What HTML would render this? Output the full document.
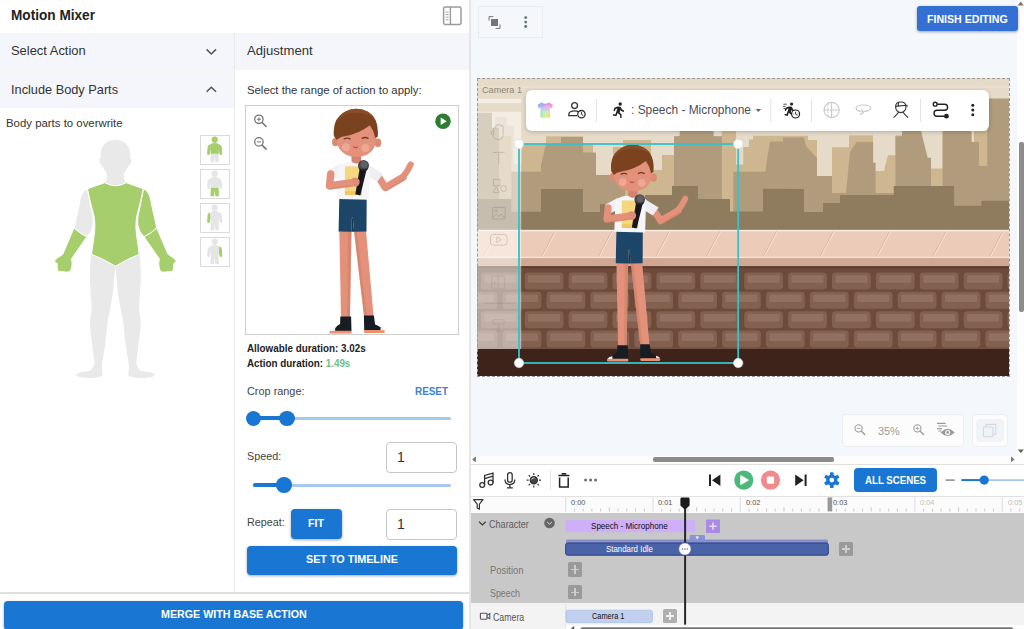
<!DOCTYPE html>
<html><head><meta charset="utf-8">
<style>
*{box-sizing:border-box;margin:0;padding:0}
html,body{width:1024px;height:629px;overflow:hidden;background:#f4f7fb;font-family:"Liberation Sans",sans-serif;color:#333}
.a{position:absolute}
.t{position:absolute;white-space:nowrap;line-height:1}
.btn{position:absolute;background:#1976d2;color:#fff;font-weight:bold;border-radius:4px;text-align:center;white-space:nowrap;box-shadow:0 1px 3px rgba(0,0,0,.35)}
.rl{transform-origin:0 50%;transform:scaleX(.92)}
.plus{position:absolute;width:14px;height:14.2px;background:#9a9a9a;border-radius:1.5px}
.plus:before{content:"";position:absolute;left:3px;right:3px;top:6.3px;height:1.6px;background:#cdcdcd}
.plus:after{content:"";position:absolute;top:3px;bottom:3px;left:6.2px;width:1.6px;background:#cdcdcd}
.plus.c:before,.plus.c:after{background:#f0f0f0}
</style></head><body>
<!-- LEFT PANEL -->
<div class="a" id="left" style="left:0;top:0;width:469px;height:629px;background:#fff"></div>
<div class="a" style="left:469px;top:0;width:2px;height:629px;background:#e6e6e8"></div>
<div class="t" id="mm" style="left:10.7px;top:8.4px;font-size:14px;font-weight:bold;color:#222;transform-origin:0 50%;transform:scaleX(0.973)">Motion Mixer</div>
<!-- header rows -->
<div class="a" style="left:0;top:33px;width:233.6px;height:37px;background:#f4f6fb"></div>
<div class="a" style="left:0;top:70.6px;width:233.6px;height:37px;background:#f4f6fb"></div>
<div class="a" style="left:234.8px;top:33px;width:234.4px;height:37px;background:#f4f6fb"></div>
<div class="a" style="left:233.6px;top:33px;width:1.2px;height:560px;background:#eaeaec"></div>
<div class="a" style="left:0;top:69.6px;width:233px;height:1.4px;background:#f5f5f4"></div>
<div class="t" id="sa" style="left:10.7px;top:44.4px;font-size:13px;color:#333;transform-origin:0 50%;transform:scaleX(0.994)">Select Action</div>
<div class="t" id="ib" style="left:10.7px;top:82.6px;font-size:13px;color:#333;transform-origin:0 50%;transform:scaleX(0.981)">Include Body Parts</div>
<div class="t" id="adj" style="left:247.0px;top:44.4px;font-size:13px;color:#333;transform-origin:0 50%;transform:scaleX(1.009)">Adjustment</div>
<div class="t" id="bp" style="left:5.7px;top:118.0px;font-size:11.5px;color:#333;transform-origin:0 50%;transform:scaleX(0.991)">Body parts to overwrite</div>
<div class="t" id="sr" style="left:246.6px;top:84.9px;font-size:11.5px;color:#333;transform-origin:0 50%;transform:scaleX(0.986)">Select the range of action to apply:</div>
<!--BODY-START-->
<svg class="a" style="left:40px;top:130px" width="160" height="260" viewBox="40 130 160 260">
<path d="M115.4,139.8 C124,139.8 130.4,146 130.2,155 L130.2,158 Q131.8,158.6 131.4,161 Q130.8,164.8 128.6,165.6 Q127,170 123.7,173.4 L123.9,178 Q124.4,181.4 126.6,182.8 Q115.4,189.6 104.2,182.8 Q106.4,181.4 106.9,178 L107.1,173.4 Q103.8,170 102.2,165.6 Q100,164.8 99.4,161 Q99,158.6 100.6,158 L100.6,155 C100.4,146 106.8,139.8 115.4,139.8 Z" fill="#e9e9e9"/>
<path d="M91.3,252 L115.3,260 L115.3,267.3 C114.6,275 114,282 113.3,289.5 C112.4,297 111,305 109.5,311.8 C108.4,317 107.8,321 107.3,325.1 C106.4,333 105.6,340 105.1,345.2 C104,352 103,358 102.2,363 Q101.6,367 102.2,370.8 Q102.8,375.6 101.8,376.3 Q96,378.4 88.4,377.9 Q79,377.8 76.1,375.2 Q76.4,373.4 80,372.6 Q87,371.6 90.6,370.8 Q94,367.6 94.6,363 C93.8,357 93,351 92.4,345.2 C91.4,337 90,330 90,322.9 C90.2,318 91.2,314 91.7,309.6 C91.6,303 91,296 90.6,289.5 C90.2,283 89.8,277 90,271.7 C90.2,265 90.8,259 91.3,252 Z" fill="#e9e9e9"/><path d="M91.3,252 L115.3,260 L115.3,267.3 C114.6,275 114,282 113.3,289.5 C112.4,297 111,305 109.5,311.8 C108.4,317 107.8,321 107.3,325.1 C106.4,333 105.6,340 105.1,345.2 C104,352 103,358 102.2,363 Q101.6,367 102.2,370.8 Q102.8,375.6 101.8,376.3 Q96,378.4 88.4,377.9 Q79,377.8 76.1,375.2 Q76.4,373.4 80,372.6 Q87,371.6 90.6,370.8 Q94,367.6 94.6,363 C93.8,357 93,351 92.4,345.2 C91.4,337 90,330 90,322.9 C90.2,318 91.2,314 91.7,309.6 C91.6,303 91,296 90.6,289.5 C90.2,283 89.8,277 90,271.7 C90.2,265 90.8,259 91.3,252 Z" fill="#e9e9e9" transform="translate(230.8,0) scale(-1,1)"/>
<g stroke="#fff" stroke-width="1" stroke-linejoin="round">
<path d="M86,189.4 C82,192 80,198 79.4,204 L74,228 Q80,233.8 86.8,236.8 Q91.8,232 92.9,225.6 C93.4,220 92.8,214 91.7,211.3 C90.2,204 88.8,197 87.6,190.2 Z" fill="#e9e9e9"/>
<path d="M74,228 Q80,233.8 86.8,236.8 L71.4,259 Q72.8,263 71.6,268 L70.2,271.6 Q67,272.8 63.6,271.8 L58,271.4 Q56.6,267 57.2,263.6 L54.6,261.8 Q54.4,259.4 57.4,258 L62.8,254.2 Z" fill="#a6ce6d"/>
<path d="M86,189.4 C82,192 80,198 79.4,204 L74,228 Q80,233.8 86.8,236.8 Q91.8,232 92.9,225.6 C93.4,220 92.8,214 91.7,211.3 C90.2,204 88.8,197 87.6,190.2 Z" fill="#a6ce6d" transform="translate(230.8,0) scale(-1,1)"/>
<path d="M74,228 Q80,233.8 86.8,236.8 L71.4,259 Q72.8,263 71.6,268 L70.2,271.6 Q67,272.8 63.6,271.8 L58,271.4 Q56.6,267 57.2,263.6 L54.6,261.8 Q54.4,259.4 57.4,258 L62.8,254.2 Z" fill="#a6ce6d" transform="translate(230.8,0) scale(-1,1)"/>
<path d="M87.5,188.7 L104.6,182.7 Q115.4,188.8 126.2,182.7 L143.3,188.7 C142,196 139,208 136.8,216 C135.8,222 135.8,228 136.1,230.4 C136.8,238 138.6,248 139.2,254.3 Q128,258.6 115.4,266.2 Q102.8,258.6 91.6,254.3 C92.2,248 94,238 94.7,230.4 C95,228 95,222 94,216 C91.8,208 88.8,196 87.5,188.7 Z" fill="#a6ce6d"/>
</g></svg>
<div class="a" style="left:199.5px;top:134.6px;width:30.5px;height:30px;border:1px solid #dadada;background:#fff"></div><svg class="a" style="left:199.5px;top:134.6px" width="30" height="30" viewBox="0 0 30 30"><path d="M10.8,18.2 L18.6,18.2 L18.9,26.4 Q18.9,27.3 18,27.3 L16.2,27.3 Q15.4,27.3 15.3,26.4 L14.7,21.6 L14.1,26.4 Q14,27.3 13.2,27.3 L11.4,27.3 Q10.5,27.3 10.5,26.4Z" fill="#e5e5e5"/><path d="M10.2,9.2 Q7.8,9.8 7.5,12.6 L7.1,19.2 Q8.4,20.6 9.7,19.6 L10.9,13.4Z" fill="#a6ce6d"/><path d="M19.2,9.2 Q21.6,9.8 21.9,12.6 L22.3,19.2 Q21,20.6 19.7,19.6 L18.5,13.4Z" fill="#a6ce6d"/><path d="M10.2,9.2 Q14.7,6.8 19.2,9.2 L18.7,18.8 L10.7,18.8Z" fill="#a6ce6d"/><circle cx="14.7" cy="4.7" r="3.1" fill="#a6ce6d"/></svg><div class="a" style="left:199.5px;top:168.6px;width:30.5px;height:30px;border:1px solid #dadada;background:#fff"></div><svg class="a" style="left:199.5px;top:168.6px" width="30" height="30" viewBox="0 0 30 30"><path d="M10.8,18.2 L18.6,18.2 L18.9,26.4 Q18.9,27.3 18,27.3 L16.2,27.3 Q15.4,27.3 15.3,26.4 L14.7,21.6 L14.1,26.4 Q14,27.3 13.2,27.3 L11.4,27.3 Q10.5,27.3 10.5,26.4Z" fill="#a6ce6d"/><path d="M10.2,9.2 Q7.8,9.8 7.5,12.6 L7.1,19.2 Q8.4,20.6 9.7,19.6 L10.9,13.4Z" fill="#e5e5e5"/><path d="M19.2,9.2 Q21.6,9.8 21.9,12.6 L22.3,19.2 Q21,20.6 19.7,19.6 L18.5,13.4Z" fill="#e5e5e5"/><path d="M10.2,9.2 Q14.7,6.8 19.2,9.2 L18.7,18.8 L10.7,18.8Z" fill="#e5e5e5"/><circle cx="14.7" cy="4.7" r="3.1" fill="#e5e5e5"/></svg><div class="a" style="left:199.5px;top:202.6px;width:30.5px;height:30px;border:1px solid #dadada;background:#fff"></div><svg class="a" style="left:199.5px;top:202.6px" width="30" height="30" viewBox="0 0 30 30"><path d="M10.8,18.2 L18.6,18.2 L18.9,26.4 Q18.9,27.3 18,27.3 L16.2,27.3 Q15.4,27.3 15.3,26.4 L14.7,21.6 L14.1,26.4 Q14,27.3 13.2,27.3 L11.4,27.3 Q10.5,27.3 10.5,26.4Z" fill="#e5e5e5"/><path d="M10.2,9.2 Q7.8,9.8 7.5,12.6 L7.1,19.2 Q8.4,20.6 9.7,19.6 L10.9,13.4Z" fill="#a6ce6d"/><path d="M19.2,9.2 Q21.6,9.8 21.9,12.6 L22.3,19.2 Q21,20.6 19.7,19.6 L18.5,13.4Z" fill="#e5e5e5"/><path d="M10.2,9.2 Q14.7,6.8 19.2,9.2 L18.7,18.8 L10.7,18.8Z" fill="#e5e5e5"/><circle cx="14.7" cy="4.7" r="3.1" fill="#e5e5e5"/></svg><div class="a" style="left:199.5px;top:236.8px;width:30.5px;height:30px;border:1px solid #dadada;background:#fff"></div><svg class="a" style="left:199.5px;top:236.8px" width="30" height="30" viewBox="0 0 30 30"><path d="M10.8,18.2 L18.6,18.2 L18.9,26.4 Q18.9,27.3 18,27.3 L16.2,27.3 Q15.4,27.3 15.3,26.4 L14.7,21.6 L14.1,26.4 Q14,27.3 13.2,27.3 L11.4,27.3 Q10.5,27.3 10.5,26.4Z" fill="#e5e5e5"/><path d="M10.2,9.2 Q7.8,9.8 7.5,12.6 L7.1,19.2 Q8.4,20.6 9.7,19.6 L10.9,13.4Z" fill="#e5e5e5"/><path d="M19.2,9.2 Q21.6,9.8 21.9,12.6 L22.3,19.2 Q21,20.6 19.7,19.6 L18.5,13.4Z" fill="#a6ce6d"/><path d="M10.2,9.2 Q14.7,6.8 19.2,9.2 L18.7,18.8 L10.7,18.8Z" fill="#e5e5e5"/><circle cx="14.7" cy="4.7" r="3.1" fill="#e5e5e5"/></svg>
<!--BODY-END-->
<svg class="a" style="left:0;top:0" width="470" height="110" viewBox="0 0 470 110">
<path d="M206.6,49.4 L211.3,54 L216,49.4" fill="none" stroke="#555" stroke-width="1.5"/>
<path d="M206.6,91.8 L211.3,87.2 L216,91.8" fill="none" stroke="#555" stroke-width="1.5"/>
<rect x="443.6" y="7" width="17.4" height="17.4" rx="1.6" fill="none" stroke="#9a9a9a" stroke-width="1.5"/>
<path d="M450.4,7v17.4" stroke="#9a9a9a" stroke-width="1.4"/>
<path d="M445.6,12h3M445.6,14.6h3M445.6,17.2h3M445.6,19.8h3" stroke="#9a9a9a" stroke-width=".9"/>
</svg>
<!-- preview box -->
<div class="a" style="left:245px;top:105px;width:214px;height:230px;border:1.5px solid #cfcfcf;background:#fff"></div>
<!--PREVIEW-START-->
<svg class="a" style="left:246.5px;top:106.5px" width="211" height="227" viewBox="246.5 106.5 211 227">
<g id="char">
<!-- right arm (viewer right) -->
<path d="M376.5,174 L384.8,187 L402.6,176.6" fill="none" stroke="#e3917a" stroke-width="7.2" stroke-linecap="round" stroke-linejoin="round"/>
<path d="M402,177 Q407,171 410.2,164" fill="none" stroke="#e3917a" stroke-width="6.2" stroke-linecap="round"/>
<path d="M386,190 L404,179" fill="none" stroke="#cf7e69" stroke-width="1.6" stroke-linecap="round" opacity=".55"/>
<!-- legs -->
<polygon points="338.8,228 351,228 349.4,318 340.5,318" fill="#e3917a"/>
<polygon points="347.5,231 351,231 349.4,318 346.8,318" fill="#cf7e69" opacity=".6"/>
<polygon points="353.4,228 365.3,228 373.2,317 363.7,317" fill="#e3917a"/>
<polygon points="353.4,231 356.4,231 366.3,317 363.7,317" fill="#cf7e69" opacity=".6"/>
<!-- shoes -->
<path d="M339.8,316 L350.6,316 L351,330.6 L333.8,330.6 Q334,326.5 339.6,323.5 Z" fill="#181d24"/>
<rect x="329" y="330.2" width="22.2" height="2.9" rx="1.2" fill="#ee9070"/>
<path d="M329.5,330.4 Q331,327.6 334.6,327.6 L334.6,330.4 Z" fill="#f1eeee"/>
<path d="M363.4,315 L373.4,315 L374.6,324 Q381,326.5 383.4,329.8 L363.7,329.8 Z" fill="#181d24"/>
<rect x="363.5" y="329.5" width="20.8" height="2.9" rx="1.2" fill="#ee9070"/>
<path d="M384,329.7 Q382.6,327.4 380,327 L380,329.7 Z" fill="#f1eeee"/>
<!-- shorts -->
<path d="M338.8,197 L366.2,197 L366,231 L353.6,231.3 L352.3,217 L351.4,217 L351,231.3 L338.1,231 Z" fill="#1d4567"/>
<path d="M351.4,217 L352.3,217 L353.6,231.3 L351,231.3 Z" fill="#163650"/>
<!-- neck -->
<rect x="351" y="153" width="9.6" height="10" fill="#d3826c"/>
<!-- shirt -->
<path d="M340.5,163 L327,170.2 L331.2,179.5 L339.5,176.4 Z" fill="#f0f0f5"/>
<path d="M366,163 L382.6,173.2 L376.6,181.6 L367.6,176 Z" fill="#eeeef4"/>
<path d="M338,165 Q345,160.6 351,161 Q355.8,164.5 360.6,161 Q366,161 369.6,165 L368.6,199.2 L336.6,198.4 Z" fill="#f6f6fa"/>
<path d="M351,161 Q355.8,165 360.6,161 Q355.8,163 351,161Z" fill="#d3826c"/>
<rect x="344.4" y="165.8" width="17" height="28.6" fill="#f7d680"/>
<rect x="344.4" y="190.6" width="17" height="3.8" fill="#f3c65e"/>
<!-- left arm -->
<path d="M330.2,173.5 L329,185.2 L354,181.8" fill="none" stroke="#e3917a" stroke-width="7.4" stroke-linecap="round" stroke-linejoin="round"/>
<path d="M329,188.6 L352,185.4" fill="none" stroke="#cf7e69" stroke-width="1.6" stroke-linecap="round" opacity=".55"/>
<!-- mic -->
<polygon points="359.2,168 366,169.6 359.8,195 354.8,193.8" fill="#17171a"/>
<circle cx="363" cy="164.9" r="5.5" fill="#46464b"/>
<circle cx="363.6" cy="164" r="3.6" fill="#5f5f66"/>
<path d="M358.2,167.2 Q362.5,170.6 367.6,167.6 L366.8,169.6 Q362.5,172 358.8,169 Z" fill="#202024"/>
<!-- hand on mic -->
<circle cx="354.6" cy="181.6" r="4.6" fill="#e3917a"/>
<path d="M352.4,178.4 L358.6,179.6 M352,181 L358.4,182.2 M352.2,183.6 L357.8,184.6" stroke="#cf7e69" stroke-width=".7" fill="none"/>
<!-- ears -->
<ellipse cx="334.9" cy="141.6" rx="3.4" ry="4.2" fill="#dd8a73"/>
<ellipse cx="377.4" cy="142.2" rx="3.4" ry="4.2" fill="#dd8a73"/>
<!-- face -->
<path d="M336,139 Q334.5,118 355.8,118 Q377,118 375.6,139 Q375,150 366,154.6 Q355.8,158.6 346,154.6 Q337,150 336,139Z" fill="#e3917a"/>
<circle cx="345.4" cy="146.8" r="4" fill="#eea795"/>
<circle cx="365" cy="147.6" r="4" fill="#eea795"/>
<path d="M343.2,138.8 Q346.6,136.6 350,138.6" stroke="#6e3a22" stroke-width="1.3" fill="none"/>
<path d="M361.2,138 Q364.6,136 368,138" stroke="#6e3a22" stroke-width="1.3" fill="none"/>
<circle cx="345.6" cy="141.6" r=".9" fill="#9fb0b8"/>
<circle cx="363.4" cy="141.8" r=".9" fill="#9fb0b8"/>
<path d="M352.6,146.4 Q354.8,148.6 357.2,146.6 Q354.8,147.4 352.6,146.4Z" fill="#d4384a" stroke="#d4384a" stroke-width=".6"/>
<!-- hair -->
<path d="M333.4,135.6 Q331.6,118 344,111.4 Q355.6,105 367.4,111.2 Q379,118 377.2,136.4 L374.8,137.6 Q373.6,130.6 369.4,124.8 Q358,133.6 344,135.8 Q338.6,136.8 336.2,139.4 Z" fill="#7b4220"/>
<path d="M344,111.4 Q355.6,105 367.4,111.2 Q372,114 374.4,118 Q362,109.6 346,113.6 Q340,116 336.4,121.6 Q338.6,114.6 344,111.4Z" fill="#8a4d26"/>
</g>
<g fill="none" stroke="#757575" stroke-width="1.3"><circle cx="258.4" cy="118.8" r="4.2"/><path d="M261.6,122 L265.6,126" stroke-linecap="round" stroke-width="1.6"/><path d="M256.4,118.8h4M258.4,116.8v4" stroke-width="1"/>
<circle cx="258.4" cy="141.4" r="4.2"/><path d="M261.6,144.6 L265.6,148.6" stroke-linecap="round" stroke-width="1.6"/><path d="M256.4,141.4h4" stroke-width="1"/></g>
<circle cx="442.5" cy="120.8" r="7.8" fill="#2e7d32"/><path d="M440.2,117 L446.2,120.8 L440.2,124.6Z" fill="#fff"/>
</svg>
<!--PREVIEW-END-->
<!-- durations -->
<div class="t" id="ad1" style="left:246.7px;top:343.1px;font-size:10.5px;font-weight:bold;color:#222;transform-origin:0 50%;transform:scaleX(0.937)">Allowable duration: 3.02s</div>
<div class="t" id="ad2" style="left:246.7px;top:358.1px;font-size:10.5px;font-weight:bold;color:#222;transform-origin:0 50%;transform:scaleX(0.937)">Action duration: <span style="color:#6cc088">1.49s</span></div>
<div class="t" id="cr" style="left:246.7px;top:385.9px;font-size:11.5px;color:#444;transform-origin:0 50%;transform:scaleX(0.947)">Crop range:</div>
<div class="t" id="rs" style="left:415.0px;top:385.9px;font-size:11.5px;color:#3a83d2;font-weight:bold;transform-origin:0 50%;transform:scaleX(0.861)">RESET</div>
<!-- crop slider -->
<div class="a" style="left:253px;top:417px;width:198px;height:3px;background:#a6c9ee;border-radius:2px"></div>
<div class="a" style="left:253px;top:416px;width:34px;height:4px;background:#1976d2"></div>
<div class="a" style="left:245.5px;top:410.5px;width:15.5px;height:15.5px;border-radius:50%;background:#1976d2"></div>
<div class="a" style="left:279px;top:410.5px;width:15.5px;height:15.5px;border-radius:50%;background:#1976d2"></div>
<!-- speed -->
<div class="t" id="sp" style="left:246.7px;top:451.1px;font-size:11.5px;color:#444;transform-origin:0 50%;transform:scaleX(0.938)">Speed:</div>
<div class="a" style="left:386px;top:441.5px;width:71px;height:31px;border:1px solid #c6c6c6;border-radius:4px;background:#fff"></div>
<div class="t" style="left:397px;top:450px;font-size:14px;color:#333">1</div>
<div class="a" style="left:253px;top:483.5px;width:198px;height:3px;background:#a6c9ee;border-radius:2px"></div>
<div class="a" style="left:253px;top:482.5px;width:31px;height:4px;background:#1976d2;border-radius:2px"></div>
<div class="a" style="left:276.2px;top:477px;width:15.5px;height:15.5px;border-radius:50%;background:#1976d2"></div>
<!-- repeat -->
<div class="t" id="rp" style="left:246.9px;top:517.2px;font-size:11.5px;color:#444;transform-origin:0 50%;transform:scaleX(0.936)">Repeat:</div>
<div class="btn" id="fit" style="left:290.5px;top:509px;width:51px;height:29.5px;font-size:11px;line-height:29px"></div>
<div class="a" style="left:386px;top:508.5px;width:71px;height:31px;border:1px solid #c6c6c6;border-radius:4px;background:#fff"></div>
<div class="t" style="left:397px;top:517px;font-size:14px;color:#333">1</div>
<div class="btn" id="stt" style="left:247px;top:546px;width:210px;height:28.5px;font-size:11px;line-height:28px"></div>
<div class="a" style="left:0;top:592px;width:469px;height:2px;background:#dfdfdf"></div>
<div class="btn" id="mrg" style="left:4px;top:601px;width:459px;height:28.6px;font-size:11px;line-height:27px"></div>

<!-- RIGHT: STAGE -->
<div class="a" style="left:477.5px;top:5.5px;width:65px;height:32.5px;border:1px solid #eaecef;background:#f5f7fb"></div>
<div class="btn" id="fin" style="z-index:3;left:916.5px;top:5.5px;width:101.5px;height:25.5px;font-size:11px;line-height:25px;background:#3470d4;border-radius:3px"></div>
<!-- right scrollbar -->
<div class="a" style="left:1017px;top:0;width:7px;height:456px;background:#fdfdfd"></div>
<div class="a" style="left:1019px;top:142px;width:4.5px;height:170px;background:#8c8c8c;border-radius:2px"></div>
<!-- SCENE placeholder -->
<!--SCENE-START-->
<svg class="a" style="left:477px;top:78px" width="532" height="298" viewBox="477 78 532 298">
<rect x="477" y="78" width="532" height="298" fill="#e6dbc8"/>
<rect x="477" y="86.5" width="532" height="1.2" fill="#efe7da" opacity=".7"/>
<polygon fill="#d6c8b0" points="495,172 495,117 506.5,117 506.5,125.6 513.7,125.6 513.7,164 522,164 522,172"/>
<polygon fill="#cdb690" points="477,229 477,199 499,199 499,136 511.4,136 511.4,172 521.4,172 521.4,150 522,150 522,144 546,144 546,131 583,131 583,144 593,144 593,175 613,175 613,147 623,147 623,140 651,140 651,170 662,170 662,155 674,155 674,131 736,131 736,164.4 743.3,164.4 743.3,147 749,147 749,139.6 753,139.6 753,135.4 808,135.4 808,140 817,140 817,176 832,176 832,147.3 849,147.3 849,131 873,131 873,171 884,171 888,155.3 895.5,155.3 895.5,131 922,131 922,168.5 942.6,168.5 942.6,131 971.5,131 971.5,142 974,142 974,131 988,131 988,100 1009,100 1009,229"/>
<rect x="522" y="129" width="199.8" height="7.3" fill="#e6dbc8"/><rect x="736" y="129" width="238" height="6.4" fill="#e6dbc8"/>
<polygon fill="#b09c7c" points="477,229 477,112.7 492,112.7 492,128 499,128 499,229"/>
<polygon fill="#b09c7c" points="511.4,229 511.4,171.7 541,171.7 541,229"/>
<polygon fill="#b09c7c" points="541,229 541,165 546,144 561,144 561,137 583,137 583,152.6 596,152.6 596,175 625,175 625,229"/>
<polygon fill="#b09c7c" points="674,229 674,136.3 679.7,136.3 679.7,131 713.6,131 713.6,136.3 721.8,136.3 721.8,229"/>
<polygon fill="#b09c7c" points="733.4,229 733.4,171.8 766,171.8 766,229"/>
<polygon fill="#b09c7c" points="762,229 762,195 767,160 770,141.6 783,141.6 783,137.5 804,137.5 806,146 817,158 817,176 832,176 832,229"/>
<polygon fill="#b09c7c" points="832,229 832,193 846,193 850,152 856.6,142 873.1,142 873.1,162.7 875.6,162.7 875.6,193 896,193 896,229"/>
<polygon fill="#b09c7c" points="895.5,229 895.5,136.3 902,136.3 902,131 921,131 927.7,157.8 931,157.8 931,229"/>
<polygon fill="#b09c7c" points="942.6,229 942.6,131 971.5,131 971.5,142 978.9,142 978.9,166 987.2,166 987.2,98.6 1009,98.6 1009,229"/>
<polygon fill="#8f7b5e" points="477,230 477,199 511.4,199 511.4,211.8 541,211.8 541,189 583,189 583,212 600,212 600,204 645,204 645,195 672,195 672,185.9 697.9,185.9 697.9,199 730,199 730,211.5 763,211.5 763,188.8 804,189 804,212 823,212 823,203 840,203 840,195 893.8,195 893.8,185.9 954.1,185.9 954.1,205.7 981.4,205.7 981.4,200.7 1009,200.7 1009,230"/>
<rect x="477" y="229.9" width="532" height="28.3" fill="#ecccb8"/>
<rect x="477" y="229.9" width="532" height="1.4" fill="#f8ece3"/>
<rect x="477" y="256.6" width="532" height="1.5" fill="#f5e2d6"/>
<path d="M440.0,231.3 L426.5,256.6" stroke="#d3ae9a" stroke-width="0.8" fill="none"/>
<path d="M441.0,231.3 L427.5,256.6" stroke="#f8e9df" stroke-width="0.8" fill="none"/>
<path d="M497.0,231.3 L483.5,256.6" stroke="#d3ae9a" stroke-width="0.8" fill="none"/>
<path d="M498.0,231.3 L484.5,256.6" stroke="#f8e9df" stroke-width="0.8" fill="none"/>
<path d="M555.0,231.3 L541.5,256.6" stroke="#d3ae9a" stroke-width="0.8" fill="none"/>
<path d="M556.0,231.3 L542.5,256.6" stroke="#f8e9df" stroke-width="0.8" fill="none"/>
<path d="M611.9,231.3 L598.4,256.6" stroke="#d3ae9a" stroke-width="0.8" fill="none"/>
<path d="M612.9,231.3 L599.4,256.6" stroke="#f8e9df" stroke-width="0.8" fill="none"/>
<path d="M669.3,231.3 L655.8,256.6" stroke="#d3ae9a" stroke-width="0.8" fill="none"/>
<path d="M670.3,231.3 L656.8,256.6" stroke="#f8e9df" stroke-width="0.8" fill="none"/>
<path d="M719.9,231.3 L706.4,256.6" stroke="#d3ae9a" stroke-width="0.8" fill="none"/>
<path d="M720.9,231.3 L707.4,256.6" stroke="#f8e9df" stroke-width="0.8" fill="none"/>
<path d="M776.7,231.3 L763.2,256.6" stroke="#d3ae9a" stroke-width="0.8" fill="none"/>
<path d="M777.7,231.3 L764.2,256.6" stroke="#f8e9df" stroke-width="0.8" fill="none"/>
<path d="M833.4,231.3 L819.9,256.6" stroke="#d3ae9a" stroke-width="0.8" fill="none"/>
<path d="M834.4,231.3 L820.9,256.6" stroke="#f8e9df" stroke-width="0.8" fill="none"/>
<path d="M889.8,231.3 L876.3,256.6" stroke="#d3ae9a" stroke-width="0.8" fill="none"/>
<path d="M890.8,231.3 L877.3,256.6" stroke="#f8e9df" stroke-width="0.8" fill="none"/>
<path d="M946.2,231.3 L932.7,256.6" stroke="#d3ae9a" stroke-width="0.8" fill="none"/>
<path d="M947.2,231.3 L933.7,256.6" stroke="#f8e9df" stroke-width="0.8" fill="none"/>
<path d="M1002.9,231.3 L989.4,256.6" stroke="#d3ae9a" stroke-width="0.8" fill="none"/>
<path d="M1003.9,231.3 L990.4,256.6" stroke="#f8e9df" stroke-width="0.8" fill="none"/>
<path d="M1059.5,231.3 L1046.0,256.6" stroke="#d3ae9a" stroke-width="0.8" fill="none"/>
<path d="M1060.5,231.3 L1047.0,256.6" stroke="#f8e9df" stroke-width="0.8" fill="none"/>
<rect x="477" y="258.1" width="532" height="8.1" fill="#cfa893"/>
<rect x="477" y="266.2" width="532" height="82.7" fill="#6d4a3a"/>
<rect x="477" y="266.2" width="532" height="2" fill="#5d3d2f"/>
<rect x="480.8" y="272.4" width="38.8" height="17" rx="3.5" fill="#83604f"/>
<rect x="484.2" y="275.2" width="32" height="7.6" rx="1" fill="#92705f"/>
<rect x="524.7" y="272.4" width="38.8" height="17" rx="3.5" fill="#83604f"/>
<rect x="528.1" y="275.2" width="32" height="7.6" rx="1" fill="#92705f"/>
<rect x="568.6" y="272.4" width="38.8" height="17" rx="3.5" fill="#83604f"/>
<rect x="572.0" y="275.2" width="32" height="7.6" rx="1" fill="#92705f"/>
<rect x="612.5" y="272.4" width="38.8" height="17" rx="3.5" fill="#83604f"/>
<rect x="615.9" y="275.2" width="32" height="7.6" rx="1" fill="#92705f"/>
<rect x="656.4" y="272.4" width="38.8" height="17" rx="3.5" fill="#83604f"/>
<rect x="659.8" y="275.2" width="32" height="7.6" rx="1" fill="#92705f"/>
<rect x="700.3" y="272.4" width="38.8" height="17" rx="3.5" fill="#83604f"/>
<rect x="703.7" y="275.2" width="32" height="7.6" rx="1" fill="#92705f"/>
<rect x="744.2" y="272.4" width="38.8" height="17" rx="3.5" fill="#83604f"/>
<rect x="747.6" y="275.2" width="32" height="7.6" rx="1" fill="#92705f"/>
<rect x="788.1" y="272.4" width="38.8" height="17" rx="3.5" fill="#83604f"/>
<rect x="791.5" y="275.2" width="32" height="7.6" rx="1" fill="#92705f"/>
<rect x="832.0" y="272.4" width="38.8" height="17" rx="3.5" fill="#83604f"/>
<rect x="835.4" y="275.2" width="32" height="7.6" rx="1" fill="#92705f"/>
<rect x="875.9" y="272.4" width="38.8" height="17" rx="3.5" fill="#83604f"/>
<rect x="879.3" y="275.2" width="32" height="7.6" rx="1" fill="#92705f"/>
<rect x="919.8" y="272.4" width="38.8" height="17" rx="3.5" fill="#83604f"/>
<rect x="923.2" y="275.2" width="32" height="7.6" rx="1" fill="#92705f"/>
<rect x="963.7" y="272.4" width="38.8" height="17" rx="3.5" fill="#83604f"/>
<rect x="967.1" y="275.2" width="32" height="7.6" rx="1" fill="#92705f"/>
<rect x="1007.6" y="272.4" width="38.8" height="17" rx="3.5" fill="#83604f"/>
<rect x="1011.0" y="275.2" width="32" height="7.6" rx="1" fill="#92705f"/>
<rect x="458.7" y="291.7" width="38.8" height="17" rx="3.5" fill="#83604f"/>
<rect x="462.1" y="294.5" width="32" height="7.6" rx="1" fill="#92705f"/>
<rect x="502.6" y="291.7" width="38.8" height="17" rx="3.5" fill="#83604f"/>
<rect x="506.0" y="294.5" width="32" height="7.6" rx="1" fill="#92705f"/>
<rect x="546.5" y="291.7" width="38.8" height="17" rx="3.5" fill="#83604f"/>
<rect x="549.9" y="294.5" width="32" height="7.6" rx="1" fill="#92705f"/>
<rect x="590.4" y="291.7" width="38.8" height="17" rx="3.5" fill="#83604f"/>
<rect x="593.8" y="294.5" width="32" height="7.6" rx="1" fill="#92705f"/>
<rect x="634.3" y="291.7" width="38.8" height="17" rx="3.5" fill="#83604f"/>
<rect x="637.7" y="294.5" width="32" height="7.6" rx="1" fill="#92705f"/>
<rect x="678.2" y="291.7" width="38.8" height="17" rx="3.5" fill="#83604f"/>
<rect x="681.6" y="294.5" width="32" height="7.6" rx="1" fill="#92705f"/>
<rect x="722.1" y="291.7" width="38.8" height="17" rx="3.5" fill="#83604f"/>
<rect x="725.5" y="294.5" width="32" height="7.6" rx="1" fill="#92705f"/>
<rect x="766.0" y="291.7" width="38.8" height="17" rx="3.5" fill="#83604f"/>
<rect x="769.4" y="294.5" width="32" height="7.6" rx="1" fill="#92705f"/>
<rect x="809.9" y="291.7" width="38.8" height="17" rx="3.5" fill="#83604f"/>
<rect x="813.3" y="294.5" width="32" height="7.6" rx="1" fill="#92705f"/>
<rect x="853.8" y="291.7" width="38.8" height="17" rx="3.5" fill="#83604f"/>
<rect x="857.2" y="294.5" width="32" height="7.6" rx="1" fill="#92705f"/>
<rect x="897.7" y="291.7" width="38.8" height="17" rx="3.5" fill="#83604f"/>
<rect x="901.1" y="294.5" width="32" height="7.6" rx="1" fill="#92705f"/>
<rect x="941.6" y="291.7" width="38.8" height="17" rx="3.5" fill="#83604f"/>
<rect x="945.0" y="294.5" width="32" height="7.6" rx="1" fill="#92705f"/>
<rect x="985.5" y="291.7" width="38.8" height="17" rx="3.5" fill="#83604f"/>
<rect x="988.9" y="294.5" width="32" height="7.6" rx="1" fill="#92705f"/>
<rect x="480.8" y="311.2" width="38.8" height="17" rx="3.5" fill="#83604f"/>
<rect x="484.2" y="314.0" width="32" height="7.6" rx="1" fill="#92705f"/>
<rect x="524.7" y="311.2" width="38.8" height="17" rx="3.5" fill="#83604f"/>
<rect x="528.1" y="314.0" width="32" height="7.6" rx="1" fill="#92705f"/>
<rect x="568.6" y="311.2" width="38.8" height="17" rx="3.5" fill="#83604f"/>
<rect x="572.0" y="314.0" width="32" height="7.6" rx="1" fill="#92705f"/>
<rect x="612.5" y="311.2" width="38.8" height="17" rx="3.5" fill="#83604f"/>
<rect x="615.9" y="314.0" width="32" height="7.6" rx="1" fill="#92705f"/>
<rect x="656.4" y="311.2" width="38.8" height="17" rx="3.5" fill="#83604f"/>
<rect x="659.8" y="314.0" width="32" height="7.6" rx="1" fill="#92705f"/>
<rect x="700.3" y="311.2" width="38.8" height="17" rx="3.5" fill="#83604f"/>
<rect x="703.7" y="314.0" width="32" height="7.6" rx="1" fill="#92705f"/>
<rect x="744.2" y="311.2" width="38.8" height="17" rx="3.5" fill="#83604f"/>
<rect x="747.6" y="314.0" width="32" height="7.6" rx="1" fill="#92705f"/>
<rect x="788.1" y="311.2" width="38.8" height="17" rx="3.5" fill="#83604f"/>
<rect x="791.5" y="314.0" width="32" height="7.6" rx="1" fill="#92705f"/>
<rect x="832.0" y="311.2" width="38.8" height="17" rx="3.5" fill="#83604f"/>
<rect x="835.4" y="314.0" width="32" height="7.6" rx="1" fill="#92705f"/>
<rect x="875.9" y="311.2" width="38.8" height="17" rx="3.5" fill="#83604f"/>
<rect x="879.3" y="314.0" width="32" height="7.6" rx="1" fill="#92705f"/>
<rect x="919.8" y="311.2" width="38.8" height="17" rx="3.5" fill="#83604f"/>
<rect x="923.2" y="314.0" width="32" height="7.6" rx="1" fill="#92705f"/>
<rect x="963.7" y="311.2" width="38.8" height="17" rx="3.5" fill="#83604f"/>
<rect x="967.1" y="314.0" width="32" height="7.6" rx="1" fill="#92705f"/>
<rect x="1007.6" y="311.2" width="38.8" height="17" rx="3.5" fill="#83604f"/>
<rect x="1011.0" y="314.0" width="32" height="7.6" rx="1" fill="#92705f"/>
<rect x="458.7" y="330.5" width="38.8" height="17" rx="3.5" fill="#83604f"/>
<rect x="462.1" y="333.3" width="32" height="7.6" rx="1" fill="#92705f"/>
<rect x="502.6" y="330.5" width="38.8" height="17" rx="3.5" fill="#83604f"/>
<rect x="506.0" y="333.3" width="32" height="7.6" rx="1" fill="#92705f"/>
<rect x="546.5" y="330.5" width="38.8" height="17" rx="3.5" fill="#83604f"/>
<rect x="549.9" y="333.3" width="32" height="7.6" rx="1" fill="#92705f"/>
<rect x="590.4" y="330.5" width="38.8" height="17" rx="3.5" fill="#83604f"/>
<rect x="593.8" y="333.3" width="32" height="7.6" rx="1" fill="#92705f"/>
<rect x="634.3" y="330.5" width="38.8" height="17" rx="3.5" fill="#83604f"/>
<rect x="637.7" y="333.3" width="32" height="7.6" rx="1" fill="#92705f"/>
<rect x="678.2" y="330.5" width="38.8" height="17" rx="3.5" fill="#83604f"/>
<rect x="681.6" y="333.3" width="32" height="7.6" rx="1" fill="#92705f"/>
<rect x="722.1" y="330.5" width="38.8" height="17" rx="3.5" fill="#83604f"/>
<rect x="725.5" y="333.3" width="32" height="7.6" rx="1" fill="#92705f"/>
<rect x="766.0" y="330.5" width="38.8" height="17" rx="3.5" fill="#83604f"/>
<rect x="769.4" y="333.3" width="32" height="7.6" rx="1" fill="#92705f"/>
<rect x="809.9" y="330.5" width="38.8" height="17" rx="3.5" fill="#83604f"/>
<rect x="813.3" y="333.3" width="32" height="7.6" rx="1" fill="#92705f"/>
<rect x="853.8" y="330.5" width="38.8" height="17" rx="3.5" fill="#83604f"/>
<rect x="857.2" y="333.3" width="32" height="7.6" rx="1" fill="#92705f"/>
<rect x="897.7" y="330.5" width="38.8" height="17" rx="3.5" fill="#83604f"/>
<rect x="901.1" y="333.3" width="32" height="7.6" rx="1" fill="#92705f"/>
<rect x="941.6" y="330.5" width="38.8" height="17" rx="3.5" fill="#83604f"/>
<rect x="945.0" y="333.3" width="32" height="7.6" rx="1" fill="#92705f"/>
<rect x="985.5" y="330.5" width="38.8" height="17" rx="3.5" fill="#83604f"/>
<rect x="988.9" y="333.3" width="32" height="7.6" rx="1" fill="#92705f"/>
<rect x="477" y="348.9" width="532" height="27.5" fill="#3d2319"/>
<use href="#char" transform="translate(289.95,40.63) scale(0.9636)"/>
<rect x="477" y="111.7" width="44.2" height="237.3" fill="#fff" opacity="0.5"/>
<rect x="477" y="98.7" width="44.2" height="4.5" fill="#fff" opacity="0.5"/>
<g fill="none" stroke="#6b5d50" stroke-width="1" opacity=".24">
<path d="M493.6,135 v-6.6 q0,-1.2 1.2,-1.2 q1.2,0 1.2,1.2 v-2.4 q0,-1.2 1.2,-1.2 q1.2,0 1.2,1.2 v-0.6 q0,-1.2 1.2,-1.2 q1.2,0 1.2,1.2 v1.2 q0,-1.2 1.2,-1.2 q1.2,0 1.2,1.2 v8 q0,5 -5,5 q-3.6,0 -5,-3 l-2.6,-4.6 q1.4,-1.6 3,0 z"/>
<path d="M493,152.4h11.6M498.8,152.4v12"/>
<rect x="493.4" y="179.4" width="6.4" height="6.4"/><circle cx="503.6" cy="188.6" r="3"/><path d="M493,192.6l3.2,-5.4 3.2,5.4z"/>
<rect x="492.6" y="207.4" width="12.6" height="11.6" rx="1"/><circle cx="496" cy="210.8" r="1.1"/><path d="M493,217.6l3.4,-3.6 2.4,2.4 2.2,-2.4 3.6,3.6"/>
<rect x="490.4" y="234.4" width="16.6" height="10.8" rx="3"/><path d="M496.8,237l4.6,2.8 -4.6,2.8z"/>
</g>
<g fill="none" stroke="#5a4a40" stroke-width="1" opacity=".12">
<rect x="491.6" y="276" width="13" height="13" rx="1.6"/><path d="M498,276v13M494.4,281v3"/>
<path d="M483.5,303.3h32"/>
<rect x="493" y="319.6" width="11" height="4.6" rx="1"/><path d="M498.4,324.2v3.4"/><rect x="497.4" y="327.6" width="2" height="4.4" rx="1"/>
</g>
<rect x="519" y="144" width="219.2" height="219" fill="none" stroke="#35c3c9" stroke-width="1.8"/>
<circle cx="519" cy="144" r="4.7" fill="#fff" stroke="#d5d8e0" stroke-width="0.6"/>
<circle cx="738.2" cy="144" r="4.7" fill="#fff" stroke="#d5d8e0" stroke-width="0.6"/>
<circle cx="519" cy="363" r="4.7" fill="#fff" stroke="#d5d8e0" stroke-width="0.6"/>
<circle cx="738.2" cy="363" r="4.7" fill="#fff" stroke="#d5d8e0" stroke-width="0.6"/>
</svg>
<!--SCENE-END-->
<div class="a" style="left:476.5px;top:77.5px;width:533px;height:299px;border:1px dashed #9a9a9a"></div>
<div class="t" id="cam1" style="left:481.8px;top:85.3px;font-size:9.5px;color:#8d8779;transform-origin:0 50%;transform:scaleX(0.959)">Camera 1</div>
<div class="a" id="tb" style="left:525.5px;top:90px;width:463px;height:40.5px;background:#fff;border-radius:6px;box-shadow:0 1px 4px rgba(0,0,0,.22)"></div>
<!--TOOLBAR-START-->
<svg class="a" style="left:525px;top:90px" width="464" height="41" viewBox="525 90 464 41">
<defs><linearGradient id="rb" x1="0" y1="0" x2="1" y2="0"><stop offset="0" stop-color="#5aa8f0"/><stop offset=".45" stop-color="#b98cf0"/><stop offset=".75" stop-color="#f77fd0"/><stop offset="1" stop-color="#f9709a"/></linearGradient>
<linearGradient id="rb2" x1="0" y1="0" x2="0" y2="1"><stop offset="0" stop-color="#fff" stop-opacity="0"/><stop offset=".38" stop-color="#e8f4f0" stop-opacity=".5"/><stop offset=".7" stop-color="#a8f0a0" stop-opacity=".95"/><stop offset="1" stop-color="#d8f060"/></linearGradient>
<linearGradient id="rb3" x1="0" y1="0" x2="1" y2="0"><stop offset="0" stop-color="#7af08a" stop-opacity=".9"/><stop offset=".5" stop-color="#fff" stop-opacity=".2"/><stop offset="1" stop-color="#ffd070" stop-opacity=".9"/></linearGradient></defs>
<!-- tshirt -->
<g id="tsh"><path d="M541.6,102.6 Q545.2,105 548.8,102.6 L553,105 L551.4,108.6 L549.6,107.8 L549.6,117.2 L540.8,117.2 L540.8,107.8 L539,108.6 L537.4,105 Z" fill="url(#rb)"/>
<path d="M541.6,102.6 Q545.2,105 548.8,102.6 L553,105 L551.4,108.6 L549.6,107.8 L549.6,117.2 L540.8,117.2 L540.8,107.8 L539,108.6 L537.4,105 Z" fill="url(#rb2)"/>
<rect x="540.8" y="111" width="8.8" height="6.2" fill="url(#rb3)"/></g>
<!-- person+clock -->
<g fill="none" stroke="#333" stroke-width="1.3"><circle cx="574.6" cy="105.6" r="2.9"/><path d="M579.2,112 Q574.6,109.6 570,112 Q568.8,112.8 568.8,114.4 L568.8,115.6 L577,115.6"/><circle cx="581.4" cy="114.2" r="3.7"/><path d="M581.4,112v2.4l1.8,1" stroke-width="1"/></g>
<path d="M596.4,99v23M770.8,99v23M811.5,99v23M920.5,99v23" stroke="#e3e3e3" stroke-width="1"/>
<!-- running man -->
<g fill="#222"><circle cx="620.2" cy="104" r="1.7"/><path d="M617.6,106.4 L620.6,106.8 L622,109.6 L624.2,110.6 L623.8,112 L621,111 L620.4,109.8 L619.6,112.6 L621.6,114.4 L621.6,118 L620.2,118 L620.2,115.2 L617.6,113 L616.4,116.2 L612.8,115.4 L613.2,114 L615.4,114.4 L617.4,108.4 L615.6,109 L614.8,111.2 L613.4,110.8 L614.4,107.8 Z"/></g>
<path d="M755.6,109 L761.2,109 L758.4,112 Z" fill="#666"/>
<!-- running+clock -->
<g fill="#222"><circle cx="791.6" cy="104" r="1.6"/><path d="M788.8,106.4 L791.8,106.8 L793.2,109.4 L795.2,110.2 L794.8,111.6 L792.2,110.8 L791.6,109.8 L790.8,112.4 L792.6,114 L791.4,115 L788.8,112.8 L787.6,116 L784.4,115.2 L784.8,113.8 L786.6,114.2 L788.6,108.4 L786.8,109 L786,111 L784.6,110.6 L785.6,107.8 Z"/><path d="M783.4,104.2h3.4M783,106.4h2.6M783.4,108.6h2" stroke="#222" stroke-width=".8"/></g>
<circle cx="795.6" cy="114" r="4" fill="#fff" stroke="#222" stroke-width="1.2"/><path d="M795.6,111.8v2.4l1.8,1M793,114h.6M798.2,114h-.6" stroke="#222" stroke-width=".9" fill="none"/>
<!-- globe -->
<g fill="none" stroke="#c9c9c9" stroke-width="1.1"><circle cx="831.6" cy="110" r="7.6"/><path d="M824,110h15.2M831.6,102.4v15.2" /><path d="M828.6,103 Q826.6,110 828.6,117" opacity=".6"/></g>
<!-- loop arrow -->
<g fill="none" stroke="#c9c9c9" stroke-width="1.2"><path d="M861,111.6 Q855.4,110.4 856.2,107.6 Q857.4,105 863.4,105 Q870.6,105 870.8,108 Q870.8,111 863.2,111.6"/><path d="M861.4,109.4 L863.4,112.8 L860,114.4" /></g>
<!-- head cap -->
<g fill="none" stroke="#333" stroke-width="1.1"><path d="M895.6,106.6 Q895.6,102 900.8,102 Q906,102 906,106.6 Q906,112 900.8,112.6 Q895.6,112 895.6,106.6Z"/><path d="M895.4,106.4 L906.2,105.2 L907.8,106.4"/><path d="M898.6,102.6 Q898,104.6 898.6,106"/><path d="M898.6,112.2 L896.8,114.4 L893.6,117.6M903,112.2 L904.8,114.4 L908,117.6"/></g>
<!-- path icon -->
<g fill="none" stroke="#222" stroke-width="1.4"><circle cx="935.2" cy="104.2" r="1.9"/><path d="M937.2,104.2 L944.6,104.2 Q947.6,104.2 947.6,107.2 Q947.6,110.2 944.6,110.2 L937,110.2 Q934,110.2 934,113.2 Q934,116.2 937,116.2 L944,116.2"/></g><circle cx="946.4" cy="116.2" r="2.4" fill="#222"/>
<g fill="#222"><circle cx="972.8" cy="105.2" r="1.5"/><circle cx="972.8" cy="110" r="1.5"/><circle cx="972.8" cy="114.8" r="1.5"/></g>
</svg>
<div class="t" id="spm" style="left:630.7px;top:104.0px;font-size:12px;color:#4a4e57;transform-origin:0 50%;transform:scaleX(0.994)">: Speech - Microphone</div>
<!--TOOLBAR-END-->
<!-- top-left stage icons -->
<svg class="a" style="left:478px;top:6px" width="64" height="32" viewBox="478 6 64 32">
<rect x="491" y="19" width="7" height="7" fill="#757575"/>
<path d="M489,20.6v-4h4.4M500,24.4v4h-4.4" fill="none" stroke="#757575" stroke-width="1"/>
<g fill="#687080"><circle cx="525.7" cy="17.6" r="1.45"/><circle cx="525.7" cy="22.1" r="1.45"/><circle cx="525.7" cy="26.5" r="1.45"/></g>
</svg>
<!-- zoom boxes -->
<div class="a" style="left:841.5px;top:413.5px;width:122.5px;height:33px;border:1px solid #eceef1;background:#fcfcfd;border-radius:4px"></div>
<div class="a" style="left:971.5px;top:413.5px;width:36.5px;height:33px;border:1px solid #eceef1;background:#fcfcfd;border-radius:4px"></div>
<div class="a" style="left:976px;top:418.5px;width:27.5px;height:23px;background:#f0f4f9;border-radius:4px"></div>
<div class="t" id="z35" style="left:878.3px;top:425.7px;font-size:11.5px;color:#9a9a9a;transform-origin:0 50%;transform:scaleX(0.947)">35%</div>
<!-- h scrollbar -->
<div class="a" style="left:471px;top:455.5px;width:553px;height:8px;background:#fdfdfd"></div>
<div class="a" style="left:652.5px;top:457px;width:181px;height:4.5px;background:#8a8a8a;border-radius:2px"></div>
<div class="a" style="left:471px;top:463.5px;width:553px;height:1px;background:#e0e0e0"></div>
<!-- zoom box icons -->
<svg class="a" style="left:842px;top:414px" width="166" height="33" viewBox="842 414 166 33">
<g fill="none" stroke="#9c9c9c" stroke-width="1.1"><circle cx="858.6" cy="428.4" r="3.6"/><path d="M861.2,431l3.6,3.6" stroke-linecap="round" stroke-width="1.4"/><path d="M856.8,428.4h3.6" stroke-width=".9"/>
<circle cx="917.4" cy="428.4" r="3.6"/><path d="M920,431l3.6,3.6" stroke-linecap="round" stroke-width="1.4"/><path d="M915.6,428.4h3.6M917.4,426.6v3.6" stroke-width=".9"/></g>
<g stroke="#9a9a9a" stroke-width="1.1" fill="none"><path d="M937,423.4h8.6M938.4,426h8.6M937,428.6h5M938.4,431h3"/></g>
<path d="M940.6,432.4 Q947.6,425.2 954.8,432.4 Q947.6,439.6 940.6,432.4Z" fill="#999"/><circle cx="947.7" cy="432.4" r="2.5" fill="#fcfcfd"/><circle cx="947.7" cy="432.4" r="1.3" fill="#999"/>
<g fill="none" stroke="#d6d8dc" stroke-width="1.1"><rect x="983.4" y="427" width="9.6" height="9.6" rx="1"/><path d="M986,427v-2.6h9.8v9.8h-2.6"/></g>
</svg>
<svg class="a" style="left:471px;top:0" width="553" height="464" viewBox="471 0 553 464">
<path d="M475.6,459.4l-3.2,0 3.2,-2.6zM475.6,459.4l-3.2,0 3.2,2.6z" fill="#777"/>
<path d="M1011,456.6 L1014.6,459.4 L1011,462.2Z" fill="#777"/><path d="M472.4,459.4 L475.8,456.6 L475.8,462.2Z" fill="#777"/>
<path d="M1017.6,5.4h6.2l-3.1,-3.8z" fill="#777"/><path d="M1017.8,449.6h6l-3,3.6z" fill="#666"/>
</svg>
<!-- transport -->
<div class="a" style="left:471px;top:464.5px;width:553px;height:31.5px;background:#fff"></div>
<div class="a" style="left:550px;top:470px;width:1px;height:20px;background:#e4e4e4"></div>
<div class="btn" id="als" style="left:854px;top:468px;width:82.5px;height:24px;font-size:11px;line-height:24px;box-shadow:none"></div>
<!-- ruler -->
<div class="a" style="left:471px;top:496px;width:553px;height:16.5px;background:#fbfbfb;border-top:1px solid #e2e2e2"></div>
<!-- tracks -->
<div class="a" style="left:471px;top:512.5px;width:553px;height:91px;background:#c8c8c8"></div>
<div class="a" style="left:471px;top:603.4px;width:553px;height:26px;background:#f3f3f3"></div>
<div class="t" id="tfit" style="left:308.1px;top:518.1px;font-size:11px;color:#fff;font-weight:bold;transform-origin:0 50%;transform:scaleX(0.964)">FIT</div>
<div class="t" id="tstt" style="left:306.0px;top:554.3px;font-size:11px;color:#fff;font-weight:bold;transform-origin:0 50%;transform:scaleX(0.978)">SET TO TIMELINE</div>
<div class="t" id="tmrg" style="left:160.7px;top:609.2px;font-size:11.5px;color:#fff;font-weight:bold;transform-origin:0 50%;transform:scaleX(0.930)">MERGE WITH BASE ACTION</div>
<div class="t" id="tfin" style="left:926.9px;top:13.7px;font-size:11px;z-index:4;color:#fff;font-weight:bold;transform-origin:0 50%;transform:scaleX(0.963)">FINISH EDITING</div>
<div class="t" id="tals" style="left:864.5px;top:474.8px;font-size:10.5px;color:#fff;font-weight:bold;transform-origin:0 50%;transform:scaleX(0.920)">ALL SCENES</div>
<!--TL-START-->
<svg class="a" style="left:471px;top:464px" width="553" height="165" viewBox="471 464 553 165">
<!-- music -->
<g fill="none" stroke="#333" stroke-width="1.3"><circle cx="482.2" cy="485" r="2.4"/><circle cx="490.6" cy="482.6" r="2.4"/><path d="M484.6,485 V475.4 L493,473 V482.6M484.6,478.6 L493,476.2"/></g>
<!-- mic -->
<g fill="none" stroke="#333" stroke-width="1.3"><rect x="507.6" y="472.6" width="4.6" height="9.6" rx="2.3"/><path d="M505,479.6 Q505,484.6 509.9,484.6 Q514.8,484.6 514.8,479.6M509.9,484.6v3M507,487.8h5.8"/></g>
<!-- brightness -->
<g fill="none" stroke="#333" stroke-width="1.2"><circle cx="533.8" cy="480.2" r="3.6" fill="#444"/><path d="M533.8,473v2M533.8,485.4v2M526.6,480.2h2M539,480.2h2M528.7,475.1l1.4,1.4M537.5,483.9l1.4,1.4M528.7,485.3l1.4,-1.4M537.5,476.5l1.4,-1.4"/></g><path d="M531.6,479.4 A2.4,2.4 0 0 1 534.6,478" fill="none" stroke="#ddd" stroke-width="1"/>
<!-- trash -->
<g fill="none" stroke="#222" stroke-width="1.5"><path d="M559.6,477.4v9.6h8.6v-9.6"/><path d="M558.4,475.6h11M561.6,473.8h4.6"/></g>
<g fill="#707070"><circle cx="585.6" cy="480" r="1.55"/><circle cx="590.6" cy="480" r="1.55"/><circle cx="595.6" cy="480" r="1.55"/></g>
<!-- skip prev / next -->
<path d="M709,474.4h2v11.6h-2zM720.4,474.4v11.6l-8.4,-5.8z" fill="#222"/>
<path d="M804.6,474.4h2v11.6h-2zM795.2,474.4v11.6l8.4,-5.8z" fill="#222"/>
<circle cx="743.8" cy="480.1" r="9.6" fill="#4cb87b"/><path d="M740.8,475.6 L748.4,480.1 L740.8,484.6Z" fill="#fff" stroke="#fff" stroke-width="1" stroke-linejoin="round"/>
<circle cx="770.5" cy="480.1" r="9.6" fill="#f08b8b"/><rect x="766.9" y="476.5" width="7.2" height="7.2" rx="1" fill="#fff"/>
<!-- gear -->
<g transform="translate(831.8,480.1)"><g fill="#1976d2"><circle r="5.6"/><g id="gt"><rect x="-1.8" y="-7.9" width="3.6" height="15.8" rx=".8"/></g><use href="#gt" transform="rotate(60)"/><use href="#gt" transform="rotate(120)"/></g><circle r="2.4" fill="#fff"/></g>
<path d="M945.6,480.1h9.2" stroke="#8a8a8a" stroke-width="1.5"/>
<path d="M961.4,480.1H1024" stroke="#a6c9ee" stroke-width="1.6"/><path d="M961.4,480.1H984" stroke="#1976d2" stroke-width="2"/><circle cx="984.2" cy="480.1" r="4.6" fill="#1976d2"/>
<!-- funnel -->
<path d="M473.6,499.6h9.4l-3.6,4.6v5l-2.2,-1.2v-3.8z" fill="none" stroke="#333" stroke-width="1.2" stroke-linejoin="round"/>
<!-- ruler -->
<path d="M565.7,497V512" stroke="#dcdcdc" stroke-width="1"/>
<path d="M574.4,508.6V511.6" stroke="#c4c4c4" stroke-width=".9"/>
<path d="M583.2,508.6V511.6" stroke="#c4c4c4" stroke-width=".9"/>
<path d="M591.9,508.6V511.6" stroke="#c4c4c4" stroke-width=".9"/>
<path d="M600.6,508.6V511.6" stroke="#c4c4c4" stroke-width=".9"/>
<path d="M609.4,507.20000000000005V511.6" stroke="#c4c4c4" stroke-width=".9"/>
<path d="M618.1,508.6V511.6" stroke="#c4c4c4" stroke-width=".9"/>
<path d="M626.8,508.6V511.6" stroke="#c4c4c4" stroke-width=".9"/>
<path d="M635.5,508.6V511.6" stroke="#c4c4c4" stroke-width=".9"/>
<path d="M644.3,508.6V511.6" stroke="#c4c4c4" stroke-width=".9"/>
<path d="M653.0,497V512" stroke="#dedede" stroke-width="1"/>
<path d="M661.7,508.6V511.6" stroke="#c4c4c4" stroke-width=".9"/>
<path d="M670.5,508.6V511.6" stroke="#c4c4c4" stroke-width=".9"/>
<path d="M679.2,508.6V511.6" stroke="#c4c4c4" stroke-width=".9"/>
<path d="M687.9,508.6V511.6" stroke="#c4c4c4" stroke-width=".9"/>
<path d="M696.6,507.20000000000005V511.6" stroke="#c4c4c4" stroke-width=".9"/>
<path d="M705.4,508.6V511.6" stroke="#c4c4c4" stroke-width=".9"/>
<path d="M714.1,508.6V511.6" stroke="#c4c4c4" stroke-width=".9"/>
<path d="M722.8,508.6V511.6" stroke="#c4c4c4" stroke-width=".9"/>
<path d="M731.6,508.6V511.6" stroke="#c4c4c4" stroke-width=".9"/>
<path d="M740.3,497V512" stroke="#dedede" stroke-width="1"/>
<path d="M749.0,508.6V511.6" stroke="#c4c4c4" stroke-width=".9"/>
<path d="M757.8,508.6V511.6" stroke="#c4c4c4" stroke-width=".9"/>
<path d="M766.5,508.6V511.6" stroke="#c4c4c4" stroke-width=".9"/>
<path d="M775.2,508.6V511.6" stroke="#c4c4c4" stroke-width=".9"/>
<path d="M784.0,507.20000000000005V511.6" stroke="#c4c4c4" stroke-width=".9"/>
<path d="M792.7,508.6V511.6" stroke="#c4c4c4" stroke-width=".9"/>
<path d="M801.4,508.6V511.6" stroke="#c4c4c4" stroke-width=".9"/>
<path d="M810.1,508.6V511.6" stroke="#c4c4c4" stroke-width=".9"/>
<path d="M818.9,508.6V511.6" stroke="#c4c4c4" stroke-width=".9"/>
<path d="M836.3,508.6V511.6" stroke="#c4c4c4" stroke-width=".9"/>
<path d="M845.1,508.6V511.6" stroke="#c4c4c4" stroke-width=".9"/>
<path d="M853.8,508.6V511.6" stroke="#c4c4c4" stroke-width=".9"/>
<path d="M862.5,508.6V511.6" stroke="#c4c4c4" stroke-width=".9"/>
<path d="M871.2,507.20000000000005V511.6" stroke="#c4c4c4" stroke-width=".9"/>
<path d="M880.0,508.6V511.6" stroke="#c4c4c4" stroke-width=".9"/>
<path d="M888.7,508.6V511.6" stroke="#c4c4c4" stroke-width=".9"/>
<path d="M897.4,508.6V511.6" stroke="#c4c4c4" stroke-width=".9"/>
<path d="M906.2,508.6V511.6" stroke="#c4c4c4" stroke-width=".9"/>
<path d="M914.9,497V512" stroke="#dedede" stroke-width="1"/>
<path d="M923.6,508.6V511.6" stroke="#c4c4c4" stroke-width=".9"/>
<path d="M932.4,508.6V511.6" stroke="#c4c4c4" stroke-width=".9"/>
<path d="M941.1,508.6V511.6" stroke="#c4c4c4" stroke-width=".9"/>
<path d="M949.8,508.6V511.6" stroke="#c4c4c4" stroke-width=".9"/>
<path d="M958.6,507.20000000000005V511.6" stroke="#c4c4c4" stroke-width=".9"/>
<path d="M967.3,508.6V511.6" stroke="#c4c4c4" stroke-width=".9"/>
<path d="M976.0,508.6V511.6" stroke="#c4c4c4" stroke-width=".9"/>
<path d="M984.7,508.6V511.6" stroke="#c4c4c4" stroke-width=".9"/>
<path d="M993.5,508.6V511.6" stroke="#c4c4c4" stroke-width=".9"/>
<path d="M1002.2,497V512" stroke="#dedede" stroke-width="1"/>
<path d="M1010.9,508.6V511.6" stroke="#c4c4c4" stroke-width=".9"/>
<path d="M1019.7,508.6V511.6" stroke="#c4c4c4" stroke-width=".9"/>
<rect x="827.6" y="497.4" width="4.6" height="14" fill="#9a9a9a"/>
<!-- tracks -->
<path d="M479,521.6l3.4,3.4 3.4,-3.4" fill="none" stroke="#333" stroke-width="1.2"/>
<circle cx="549.5" cy="523" r="5.3" fill="#666"/><path d="M547.2,522l2.3,2.3 2.3,-2.3" fill="none" stroke="#ddd" stroke-width="1"/>
<rect x="565.7" y="520" width="129.4" height="12.2" rx="1.5" fill="#cdb0f8"/>
<rect x="706" y="519.4" width="14" height="13.6" rx="1" fill="#a98be2"/><path d="M709.4,526.2h7.2M713,522.6v7.2" stroke="#e9defa" stroke-width="1.5"/>
<rect x="689.6" y="535" width="15.4" height="6" rx="1" fill="#8b93d8"/><path d="M695.4,536.6h3.6l-1.8,2.6z" fill="#fff"/>
<rect x="566" y="539.6" width="262" height="5" rx="1.5" fill="#8790cf"/>
<rect x="565.7" y="543" width="262.6" height="12.2" rx="2" fill="#4a63a8" stroke="#2b3e7c" stroke-width="1"/>
<!-- camera row -->
<path d="M565.7,604V627" stroke="#e0e0e0" stroke-width="1"/>
<rect x="566" y="610.2" width="86.4" height="12.4" rx="2" fill="#c0d0ee" stroke="#a9bfe6" stroke-width=".8"/>
<g fill="none" stroke="#555" stroke-width="1.1"><rect x="480.4" y="613.2" width="6.6" height="6" rx=".6"/><path d="M487,615.4l2.8,-1.8v5.2l-2.8,-1.8"/></g>
<!-- playhead -->
<path d="M685.1,500V624.8" stroke="#262626" stroke-width="2"/>
<path d="M680.4,499 Q680.4,497.6 681.8,497.6 H688.2 Q689.6,497.6 689.6,499 V505.6 L685,509.8 L680.4,505.6Z" fill="#1c1c1c"/>
<circle cx="684.9" cy="549" r="6" fill="#fff" stroke="#8a93c8" stroke-width=".6"/><g fill="#4a63a8"><circle cx="682.6" cy="549" r=".7"/><circle cx="684.9" cy="549" r=".7"/><circle cx="687.2" cy="549" r=".7"/></g>
<!-- bottom scroll -->
<rect x="566" y="624.8" width="458" height="4.4" fill="#fdfdfd"/><rect x="580.5" y="627.2" width="432.7" height="4" rx="2" fill="#777"/><path d="M571,628.6l3.2,-2.6v4z" fill="#555"/>
</svg>
<div class="plus" style="left:839px;top:542px"></div>
<div class="plus" style="left:568px;top:562.4px"></div>
<div class="plus" style="left:568px;top:585.3px"></div>
<div class="plus c" style="left:663px;top:609.2px;background:#b0b0b0"></div>
<div class="t rl" style="left:571.0px;top:499.4px;font-size:8px;color:#555">0:00</div>
<div class="t rl" style="left:658.3px;top:499.4px;font-size:8px;color:#555">0:01</div>
<div class="t rl" style="left:745.6px;top:499.4px;font-size:8px;color:#555">0:02</div>
<div class="t rl" style="left:832.9px;top:499.4px;font-size:8px;color:#555">0:03</div>
<div class="t rl" style="left:920.2px;top:499.4px;font-size:8px;color:#c2c2c2">0:04</div>
<div class="t rl" style="left:1007.5px;top:499.4px;font-size:8px;color:#c2c2c2">0:05</div>
<div class="t" id="lch" style="left:489.0px;top:518.7px;font-size:10.5px;color:#5c5c5c;transform-origin:0 50%;transform:scaleX(0.865)">Character</div>
<div class="t" id="lpo" style="left:490.3px;top:565.3px;font-size:10.5px;color:#777;transform-origin:0 50%;transform:scaleX(0.897)">Position</div>
<div class="t" id="lsp" style="left:490.3px;top:588.1px;font-size:10.5px;color:#777;transform-origin:0 50%;transform:scaleX(0.842)">Speech</div>
<div class="t" id="lca" style="left:492.9px;top:611.5px;font-size:10.5px;color:#555;transform-origin:0 50%;transform:scaleX(0.835)">Camera</div>
<div class="t" id="csm" style="left:590.6px;top:521.8px;font-size:9px;color:#111;transform-origin:0 50%;transform:scaleX(0.896)">Speech - Microphone</div>
<div class="t" id="csi" style="left:606.4px;top:544.8px;font-size:9px;color:#fff;transform-origin:0 50%;transform:scaleX(0.876)">Standard Idle</div>
<div class="t" id="cc1" style="left:592.4px;top:612.2px;font-size:9px;color:#111;transform-origin:0 50%;transform:scaleX(0.822)">Camera 1</div>
<!--TL-END-->
</body></html>
